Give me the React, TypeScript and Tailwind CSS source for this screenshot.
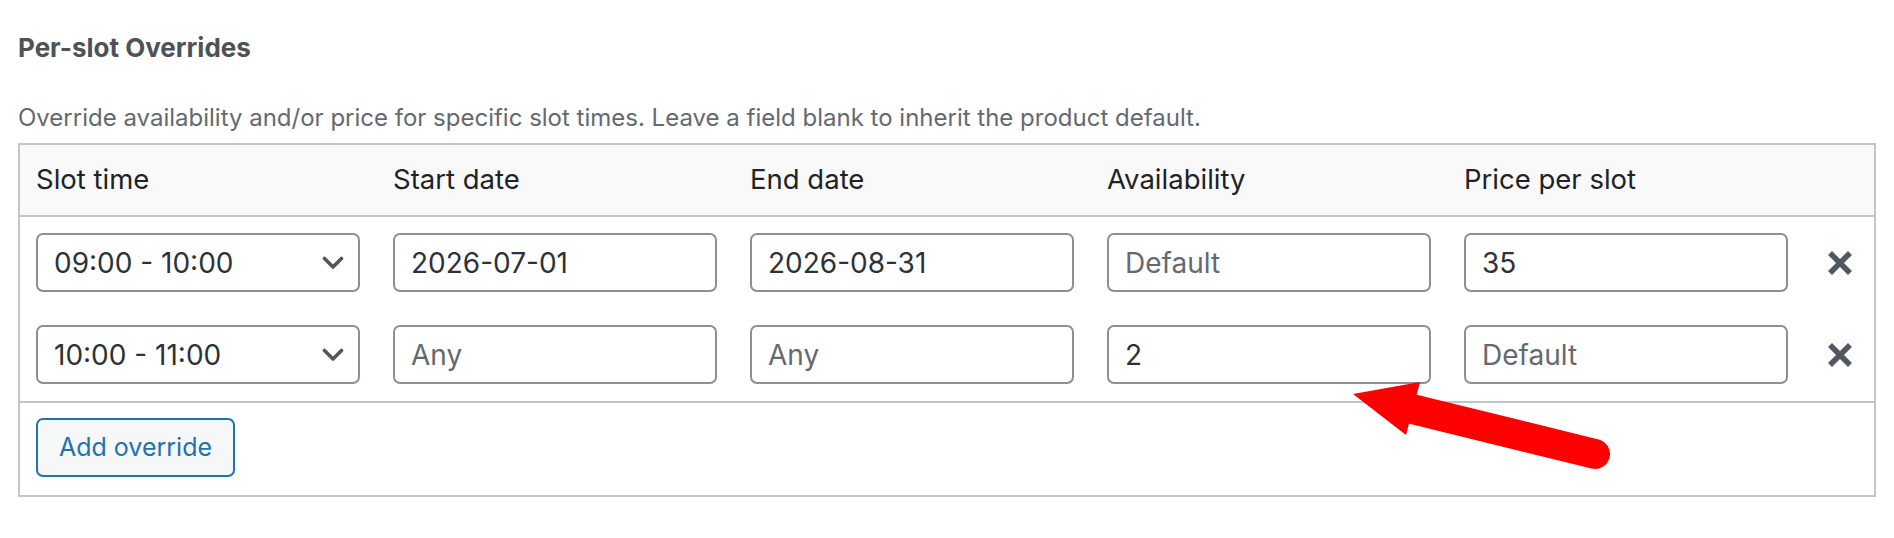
import React from 'react';

type Row = {
  slot: string;
  start: string;
  end: string;
  availability: string;
  price: string;
};

const rows: Row[] = [
  { slot: '09:00 - 10:00', start: '2026-07-01', end: '2026-08-31', availability: '', price: '35' },
  { slot: '10:00 - 11:00', start: '', end: '', availability: '2', price: '' },
];

const slotOptions = ['09:00 - 10:00', '10:00 - 11:00', '11:00 - 12:00'];

const cell = 'pl-[16px] pr-[17px]';
const field =
  'block w-full h-[59px] rounded-[7px] border-2 border-[#8c8f94] bg-white pl-[16px] pr-[12px] text-[28px] text-[#2c3338] placeholder:text-[#646970] outline-none';

function Chevron() {
  return (
    <svg
      className="pointer-events-none absolute right-[16px] top-1/2 -translate-y-1/2"
      width="22"
      height="14"
      viewBox="0 0 22 14"
      fill="none"
    >
      <path d="M2.5 2.5 L11 11 L19.5 2.5" stroke="#50575e" strokeWidth="3.6" strokeLinecap="round" strokeLinejoin="round" />
    </svg>
  );
}

function RemoveIcon() {
  return (
    <svg width="24" height="24" viewBox="0 0 24 24" fill="none">
      <path d="M4 4 L20 20 M20 4 L4 20" stroke="#50575e" strokeWidth="5.6" strokeLinecap="square" />
    </svg>
  );
}

export default function App() {
  return (
    <div className="relative min-h-[538px] bg-white px-[18px] font-['Inter','Liberation_Sans',sans-serif] text-[#2c3338]">
      <h4 className="pt-[32px] text-[26px] leading-[32px] font-bold text-[#4d5257]">Per-slot Overrides</h4>
      <p className="mt-[39px] text-[24px] leading-[30px] text-[#646970]">
        Override availability and/or price for specific slot times. Leave a field blank to inherit the product default.
      </p>

      <div className="mt-[10px] border-2 border-[#c3c4c7]">
        <div className="grid h-[72px] grid-cols-[repeat(5,357px)_1fr] items-center border-b-2 border-[#c3c4c7] bg-[#f9f9f9] text-[27.5px] text-[#1d2327]">
          <div className={cell}>Slot time</div>
          <div className={cell}>Start date</div>
          <div className={cell}>End date</div>
          <div className={cell}>Availability</div>
          <div className={cell}>Price per slot</div>
          <div />
        </div>

        <div className="border-b-2 border-[#c3c4c7]">
          {rows.map((r, i) => (
            <div key={i} className="grid grid-cols-[repeat(5,357px)_1fr] items-center pt-[16px] pb-[17px]">
              <div className={cell}>
                <div className="relative">
                  <select defaultValue={r.slot} className={`${field} appearance-none`}>
                    {slotOptions.map((o) => (
                      <option key={o}>{o}</option>
                    ))}
                  </select>
                  <Chevron />
                </div>
              </div>
              <div className={cell}>
                <input className={field} defaultValue={r.start} placeholder="Any" />
              </div>
              <div className={cell}>
                <input className={field} defaultValue={r.end} placeholder="Any" />
              </div>
              <div className={cell}>
                <input className={field} defaultValue={r.availability} placeholder="Default" />
              </div>
              <div className={cell}>
                <input className={field} defaultValue={r.price} placeholder="Default" />
              </div>
              <div className="flex justify-center">
                <button className="flex items-center justify-center" aria-label="Remove override">
                  <RemoveIcon />
                </button>
              </div>
            </div>
          ))}
        </div>

        <div className="pl-[16px] pt-[15px] pb-[18px]">
          <button className="h-[59px] w-[199px] rounded-[7px] border-2 border-[#2271b1] bg-[#f6f7f7] text-[25px] text-[#2271b1]">
            Add override
          </button>
        </div>
      </div>

      {/* annotation arrow */}
      <svg className="pointer-events-none absolute inset-0" width="1894" height="538" viewBox="0 0 1894 538">
        <line x1="1595" y1="454" x2="1408" y2="408" stroke="#ff0000" strokeWidth="30" strokeLinecap="round" />
        <polygon points="1353,394 1420,382 1406,435" fill="#ff0000" />
      </svg>
    </div>
  );
}
